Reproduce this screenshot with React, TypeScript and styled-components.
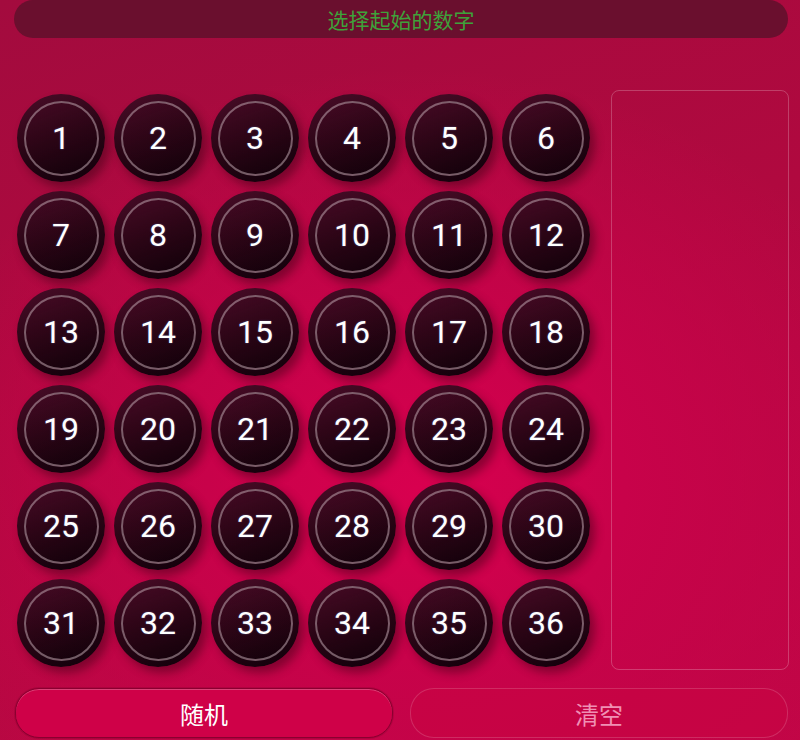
import React from 'react';
import styled, {createGlobalStyle} from 'styled-components';

const GlobalStyle = createGlobalStyle`
  html, body {
    margin: 0;
    padding: 0;
  }
  body {
    font-family: Roboto, "Noto Sans CJK SC", sans-serif;
    background: #b8073f;
  }
`;

const Page = styled.div`
  width: 800px;
  height: 740px;
  overflow: hidden;
  background:
    radial-gradient(ellipse 520px 420px at 52% 66%, #d8004f 0%, #c8024a 40%, rgba(180, 6, 64, 0) 100%),
    linear-gradient(160deg, #a30b3e 0%, #b0093f 45%, #c10646 100%);
`;

const Header = styled.div`
  height: 38px;
  margin: 0 12px 0 14px;
  border-radius: 19px;
  background: #6a0f2e;
  display: flex;
  align-items: center;
  justify-content: center;
  color: #3ea23a;
  font-family: "Noto Sans CJK SC", sans-serif;
  font-size: 21px;
  line-height: 1;
`;

const Main = styled.div`
  display: flex;
  align-items: flex-start;
  margin-top: 52px;
  padding-left: 17px;
`;

const Board = styled.div`
  display: grid;
  grid-template-columns: repeat(6, 88px);
  grid-auto-rows: 88px;
  gap: 9px;
  margin-top: 4px;
`;

const Ball = styled.div`
  width: 88px;
  height: 88px;
  border-radius: 50%;
  background: linear-gradient(160deg, #4a0c28 0%, #2a0515 50%, #10000a 100%);
  box-shadow: 5px 6px 10px rgba(50, 0, 18, 0.45);
  display: flex;
  align-items: center;
  justify-content: center;
  cursor: pointer;
`;

const BallFace = styled.div`
  width: 75px;
  height: 75px;
  box-sizing: border-box;
  border-radius: 50%;
  border: 2px solid rgba(190, 165, 175, 0.55);
  background: linear-gradient(160deg, rgba(70, 10, 35, 0.4) 0%, rgba(10, 0, 5, 0.3) 100%);
  display: flex;
  align-items: center;
  justify-content: center;
  color: #ffffff;
  font-family: Roboto, sans-serif;
  font-size: 32px;
  font-weight: 400;
  text-shadow: 0 0 2px rgba(130, 170, 255, 0.45);
`;

const Panel = styled.div`
  width: 176px;
  height: 578px;
  margin-left: 21px;
  border: 1px solid rgba(255, 255, 255, 0.22);
  border-radius: 8px;
`;

const Footer = styled.div`
  display: grid;
  grid-template-columns: 1fr 1fr;
  gap: 17px;
  margin: 18px 12px 0 15px;
`;

const ActionButton = styled.button<{ $primary?: boolean }>`
  height: 50px;
  border-radius: 24px;
  font-family: "Noto Sans CJK SC", sans-serif;
  font-size: 24px;
  cursor: pointer;
  background: ${p => (p.$primary ? '#cf0148' : 'rgba(200, 4, 66, 0.6)')};
  color: ${p => (p.$primary ? '#ffffff' : '#f090b4')};
  border: 1px solid ${p => (p.$primary ? '#8a0030' : 'rgba(255, 255, 255, 0.16)')};
  box-shadow: ${p => (p.$primary ? 'inset 0 1px 0 rgba(255,255,255,0.25), 0 0 0 1px rgba(120,0,40,0.25)' : 'none')};
  padding: 0;
`;

const NUMBERS = Array.from({length: 36}, (_, i) => i + 1);

const App = () => {
    return (
        <Page>
            <GlobalStyle />
            <Header>选择起始的数字</Header>
            <Main>
                <Board>
                    {NUMBERS.map(n => (
                        <Ball key={n}>
                            <BallFace>{n}</BallFace>
                        </Ball>
                    ))}
                </Board>
                <Panel />
            </Main>
            <Footer>
                <ActionButton $primary>随机</ActionButton>
                <ActionButton>清空</ActionButton>
            </Footer>
        </Page>
    );
};

export default App;
